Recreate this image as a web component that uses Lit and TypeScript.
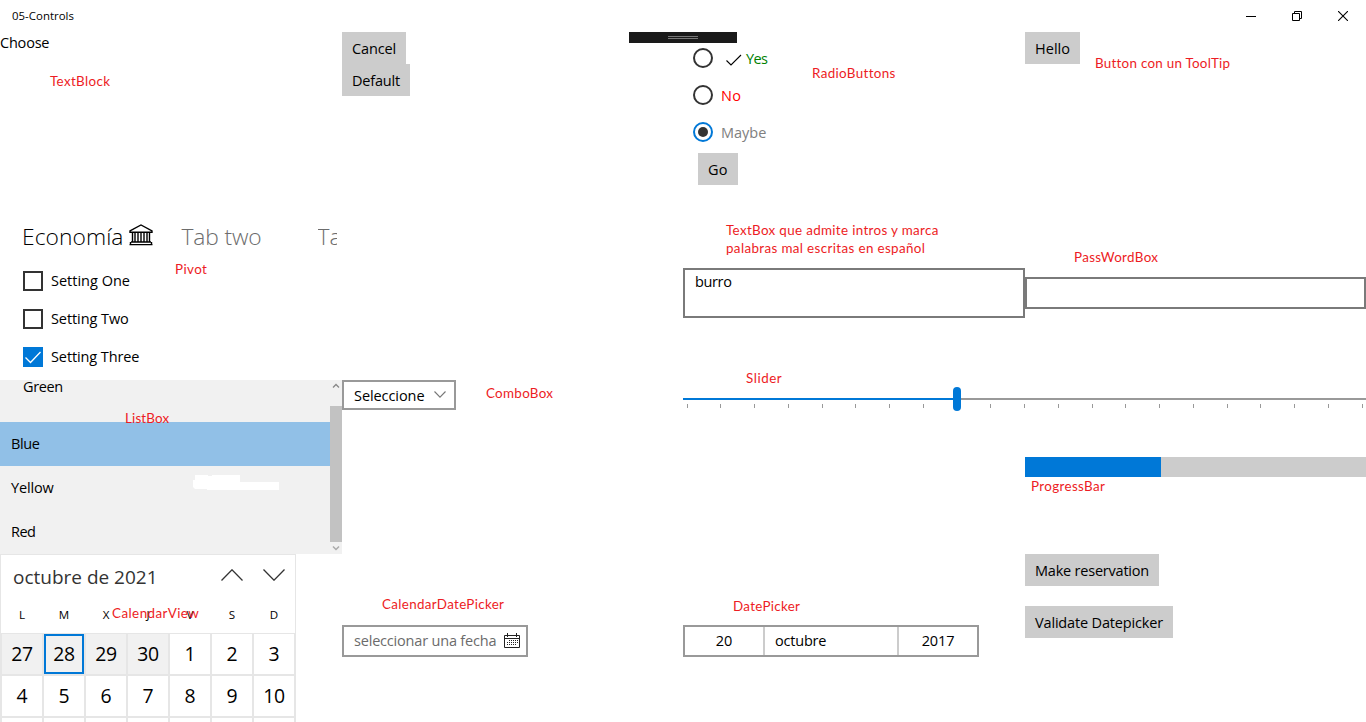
import { LitElement, html, css, svg } from "lit";
import { customElement } from "lit/decorators.js";
import { styleMap } from "lit/directives/style-map.js";

const UI = '"Open Sans", "Noto Sans", sans-serif';
const NOTE = 'Lato, "Open Sans", sans-serif';
const pen = document.createElement("canvas").getContext("2d")!;

/** Tracking that makes a run of text advance by the given width. */
function tracking(text: string, width: number, size: number, weight = 400, family = UI) {
  pen.font = `${weight} ${size}px ${family}`;
  return `${((width - pen.measureText(text).width) / text.length).toFixed(3)}px`;
}

function label(text: string, width: number, size = 14.5, weight = 400) {
  return html`<span class="label" style=${styleMap({
    letterSpacing: tracking(text, width, size, weight),
    fontSize: `${size}px`,
    fontWeight: String(weight),
  })}>${text}</span>`;
}

const notes: [string, number, number, number][] = [
  ["TextBlock", 50, 86, 60],
  ["RadioButtons", 812, 78, 83],
  ["Button con un ToolTip", 1095, 68, 135],
  ["Pivot", 175, 274, 32],
  ["TextBox que admite intros y marca", 726, 235, 213],
  ["palabras mal escritas en español", 726, 253, 199],
  ["PassWordBox", 1074, 262, 84],
  ["ListBox", 125, 423, 44],
  ["ComboBox", 486, 398, 67],
  ["Slider", 746, 383, 36],
  ["ProgressBar", 1031, 491, 74],
  ["CalendarView", 112, 618, 87],
  ["CalendarDatePicker", 382, 609, 122],
  ["DatePicker", 733, 611, 67],
];

const days = [27, 28, 29, 30, 1, 2, 3, 4, 5, 6, 7, 8, 9, 10];

@customElement("app-root")
export class AppRoot extends LitElement {
  static styles = css`
    :host { display: block; position: relative; width: 1366px; height: 722px; overflow: hidden;
      background: #fff; color: #000; font-family: "Open Sans", "Noto Sans", sans-serif; font-size: 14.5px; line-height: 20px; }
    * { box-sizing: border-box; }
    svg { display: block; flex: none; }
    .label { display: block; white-space: nowrap; flex: none; }
    .titlebar { height: 32px; display: flex; justify-content: space-between; padding: 6px 18px 0 12px; }
    .window { display: flex; gap: 36px; padding-top: 5px; }
    .grid { display: grid; grid-template-columns: 342px 341px 342px 341px; grid-template-rows: repeat(4, 174px); }
    .cell { min-width: 0; min-height: 0; }
    .choose { padding-top: 1px; }
    .btn { display: block; border: 0; background: #ccc; height: 32px; padding: 1px 10px 0; font: inherit; color: #000; text-align: left; line-height: 20px; }
    .w64 { width: 64px; } .w68 { width: 68px; } .w55 { width: 55px; } .w40 { width: 40px; }
    .w134 { width: 134px; } .w148 { width: 148px; margin-top: 20px; }
    .radios { padding: 16px 0 0 10px; }
    .radio { display: flex; height: 37px; gap: 8px; }
    .circle { width: 20px; height: 20px; border: 2px solid #333; border-radius: 50%; flex: none; }
    .circle.on { border-color: #0078d7; padding: 3px; }
    .circle.on::after { content: ""; display: block; width: 10px; height: 10px; border-radius: 50%; background: #333; }
    .green { color: #008000; display: flex; gap: 4px; padding: 1px 0 0 5px; }
    .green svg { margin-top: 5px; }
    .red { color: #f00; padding-top: 1px; } .gray { color: #808080; padding-top: 1px; }
    .go { margin: -6px 0 0 5px; }
    .pivot { padding: 0 5px 0 22px; }
    .tabs { display: flex; height: 65px; padding-top: 15px; line-height: 32px; overflow: hidden; }
    .tabs svg { margin: 3px 0 0 5px; }
    .tab { color: #6c6c6c; margin-left: 29px; width: 107px; flex: none; }
    .tab + .tab { width: 20px; overflow: hidden; }
    .check { display: flex; height: 38px; gap: 8px; padding-left: 1px; }
    .box { width: 20px; height: 20px; border: 2px solid #333; flex: none; }
    .box.on { background: #0078d7; border-color: #0078d7; }
    .list { display: flex; background: #f1f1f1; overflow: hidden; }
    .items { width: 330px; display: flex; flex-direction: column; position: relative; }
    .item { height: 44px; padding: 12px 11px 0; flex: none; }
    .item.first { height: 42px; padding: 0 0 0 23px; }
    .item.first .label { margin-top: -3px; }
    .item.on { background: #91c0e7; }
    .smear { position: absolute; left: 193px; top: 95px; }
    .scroll { width: 12px; display: flex; flex-direction: column; }
    .thumb { height: 136px; background: #c2c2c2; }
    .combo { width: 114px; height: 30px; border: 2px solid #999; display: flex; padding: 4px 8px 0 10px; justify-content: space-between; }
    .combo svg { margin-top: 5px; }
    .textcell { padding-top: 62px; }
    .textbox { border: 2px solid #7a7a7a; height: 50px; padding: 2px 10px; }
    .passcell { padding-top: 71px; }
    .pass { border: 2px solid #7a7a7a; height: 32px; }
    .slider { padding-top: 7px; }
    .span { grid-column: 3 / span 2; display: flex; flex-direction: column; }
    .progress { margin: 46px 0 0 342px; height: 20px; background: #ccc; }
    .bar { width: 136px; height: 20px; background: #0078d7; }
    .calendar { width: 296px; height: 174px; border: 1px solid #e6e6e6; }
    .calhead { height: 40px; display: flex; padding: 9px 11px 0 12px; color: #333; line-height: 26px; }
    .calhead .label { width: 208px; }
    .arrows { display: flex; gap: 20px; padding-top: 5px; }
    .week { height: 38px; display: grid; grid-template-columns: repeat(7, 42px); text-align: center; font-size: 11.6px; padding-top: 10px; }
    .days { display: grid; grid-template-columns: repeat(7, 40px); grid-auto-rows: 40px; gap: 2px; padding: 1px; background: #e6e6e6; }
    .day { background: #fff; display: flex; justify-content: center; line-height: 28px; padding-top: 6px; }
    .day.out { background: #f1f1f1; }
    .day.today { border: 2px solid #0078d7; padding-top: 4px; }
    .pick { padding-top: 71px; }
    .cdp { width: 186px; height: 32px; border: 2px solid #999; display: flex; justify-content: space-between; padding: 4px 6px 0 10px; color: #6b6b6b; }
    .cdp svg { margin-top: 2px; }
    .dp { width: 296px; height: 32px; border: 2px solid #999; display: grid; grid-template-columns: 80px 134px 78px; }
    .part { border-right: 2px solid #ccc; display: flex; justify-content: center; padding-top: 4px; }
    .part.month { justify-content: flex-start; padding-left: 10px; }
    .part.year { border: 0; }
    .debugbar { position: absolute; left: 629px; top: 32px; width: 108px; height: 11px; background: #1a1a1a; padding: 4px 39px; }
    .grip { height: 3px; border: solid #777; border-width: 1px 0; }
    .note { position: absolute; white-space: nowrap; color: #ed1c24; font: 13.4px/18px Lato, "Open Sans", sans-serif; }
  `;

  private chevron(w: number, h: number, up: boolean, color: string, sw = 1.2) {
    const d = up ? `M.5 ${h - 0.5}L${w / 2} .8L${w - 0.5} ${h - 0.5}` : `M.5 .5L${w / 2} ${h - 0.8}L${w - 0.5} .5`;
    return html`<svg width=${w} height=${h} fill="none" stroke=${color} stroke-width=${sw}><path d=${d} /></svg>`;
  }

  render() {
    return html`
      <div class="titlebar">
        ${label("05-Controls", 62, 11.4)}
        <div class="window">
          <svg width="10" height="10"><path d="M0 5.5H10" stroke="#000" /></svg>
          <svg width="10" height="10" fill="none" stroke="#000"><path d="M.5 2.5H7.5V9.5H.5ZM2.5 2.5V.5H9.5V7.5H7.5" /></svg>
          <svg width="10" height="10" stroke="#000" stroke-width="1.1"><path d="M0 0L10 10M10 0L0 10" /></svg>
        </div>
      </div>
      <div class="grid">
        <div class="cell choose">${label("Choose", 49.3)}</div>
        <div class="cell">
          <button class="btn w64">${label("Cancel", 44)}</button>
          <button class="btn w68">${label("Default", 48)}</button>
        </div>
        <div class="cell radios">
          <div class="radio"><span class="circle"></span>
            <span class="green"><svg width="16" height="12" fill="none" stroke="#000" stroke-width="1.1"><path d="M.5 6.5L5 11L15 1" /></svg>${label("Yes", 21.3)}</span></div>
          <div class="radio"><span class="circle"></span><span class="red">${label("No", 20.3)}</span></div>
          <div class="radio"><span class="circle on"></span><span class="gray">${label("Maybe", 45.3)}</span></div>
          <button class="btn w40 go">${label("Go", 19.5)}</button>
        </div>
        <div class="cell"><button class="btn w55">${label("Hello", 35)}</button></div>

        <div class="cell pivot">
          <div class="tabs">
            ${label("Economía", 101.5, 22.8, 300)}
            <svg width="24" height="22" fill="none" stroke="#000" stroke-width="1.4">
              <path d="M1 6.8L12 1L23 6.8V8.2H1ZM3.5 8V17.5M6 8V17.5M9 8V17.5M12 8V17.5M15 8V17.5M18 8V17.5M20.5 8V17.5M2 18H22M.5 20.6H23.5M1.5 18V21M22.5 18V21" />
            </svg>
            <span class="tab">${label("Tab two", 80, 22.8, 300)}</span>
            <span class="tab">${label("Tab three", 98, 22.8, 300)}</span>
          </div>
          <div class="check"><span class="box"></span>${label("Setting One", 79)}</div>
          <div class="check"><span class="box"></span>${label("Setting Two", 77.7)}</div>
          <div class="check"><span class="box on"><svg width="16" height="16" fill="none" stroke="#fff" stroke-width="1.3"><path d="M.5 8.5L5.5 13.5L15.5 3" /></svg></span>${label("Setting Three", 88.3)}</div>
        </div>
        <div class="cell"></div>
        <div class="cell textcell"><div class="textbox">${label("burro", 36.5)}</div></div>
        <div class="cell passcell"><div class="pass"></div></div>

        <div class="cell list">
          <div class="items">
            <div class="item first">${label("Green", 39.7)}</div>
            <div class="item on">${label("Blue", 28.5)}</div>
            <div class="item">${label("Yellow", 42.5)}</div>
            <div class="item">${label("Red", 24.5)}</div>
            <svg class="smear" width="86" height="15" fill="#fff"><path d="M2 0H15V1H19V0H47V7H86V15H14V14H2L0 12V5H2Z" /></svg>
          </div>
          <div class="scroll">
            <svg width="12" height="26" fill="none" stroke="#888" stroke-width="1.3"><path d="M3 7.5L6 4.5L9 7.5" /></svg>
            <div class="thumb"></div>
            <svg width="12" height="12" fill="none" stroke="#aaa" stroke-width="1.5"><path d="M3 4.5L6 7.5L9 4.5" /></svg>
          </div>
        </div>
        <div class="cell"><div class="combo">${label("Seleccione", 70.5)}${this.chevron(12, 7, false, "#777", 1.1)}</div></div>
        <div class="cell span">
          <div class="slider">
            <svg width="683" height="24">
              <path d="M0 12H683" stroke="#999" stroke-width="2" />
              <path d="M0 12H274" stroke="#0078d7" stroke-width="2" />
              ${Array.from({ length: 21 }, (_, i) => svg`<rect x=${Math.floor(4.2 + i * 33.75)} y="17" width="1" height="4" fill=${i === 8 ? "none" : "#999"} />`)}
              <rect x="270" width="8" height="24" rx="4" fill="#0078d7" />
            </svg>
          </div>
          <div class="progress"><div class="bar"></div></div>
        </div>

        <div class="cell">
          <div class="calendar">
            <div class="calhead">${label("octubre de 2021", 144.5, 19)}
              <div class="arrows">${this.chevron(22, 12, true, "#333", 1.3)}${this.chevron(22, 12, false, "#333", 1.3)}</div>
            </div>
            <div class="week">${["L", "M", "X", "J", "V", "S", "D"].map((d) => html`<span>${d}</span>`)}</div>
            <div class="days">
              ${days.map((d, i) => html`<div class="day ${i < 4 ? "out" : ""} ${i === 1 ? "today" : ""}">${label(String(d), d > 9 ? 21.6 : 10.8, 19.4)}</div>`)}
              ${Array.from({ length: 7 }, () => html`<div class="day"></div>`)}
            </div>
          </div>
        </div>
        <div class="cell pick">
          <div class="cdp">${label("seleccionar una fecha", 142.3)}
            <svg width="16" height="16" fill="none" stroke="#222"><path d="M.5 2.5H15.5V14.5H.5ZM.5 5.5H15.5M3.5 0V4M12.5 0V4" /><path d="M5 7.5H14M3 9.5H14M3 11.5H12" stroke-dasharray="1 1" /></svg>
          </div>
        </div>
        <div class="cell pick">
          <div class="dp">
            <div class="part">${label("20", 16.6)}</div>
            <div class="part month">${label("octubre", 51.3)}</div>
            <div class="part year">${label("2017", 32.6)}</div>
          </div>
        </div>
        <div class="cell">
          <button class="btn w134">${label("Make reservation", 114)}</button>
          <button class="btn w148">${label("Validate Datepicker", 128)}</button>
        </div>
      </div>
      <div class="debugbar"><div class="grip"></div></div>
      ${notes.map(([text, x, base, w]) => html`<span class="note" style=${styleMap({
        left: `${x}px`, top: `${base - 14}px`, letterSpacing: tracking(text, w + 0.3, 13.4, 400, NOTE),
      })}>${text}</span>`)}
    `;
  }
}
